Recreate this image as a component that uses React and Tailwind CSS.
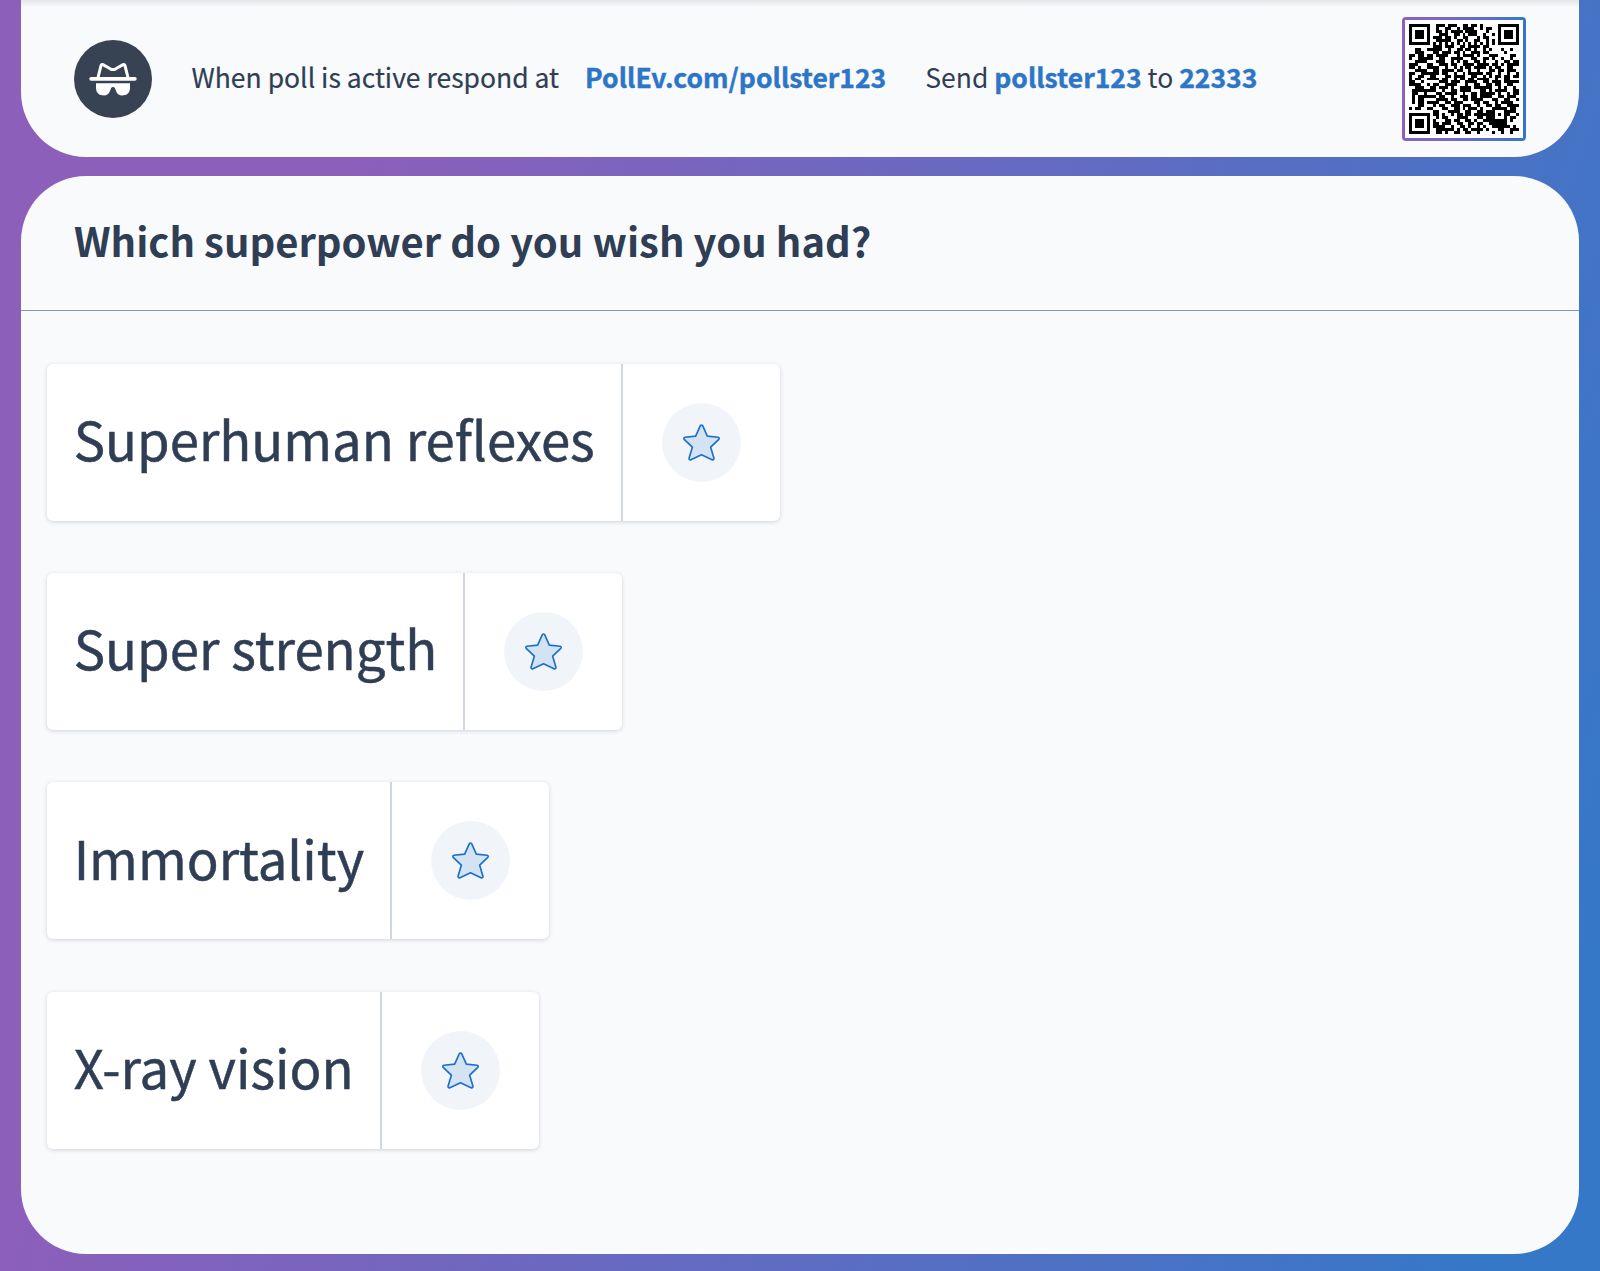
import clsx from "clsx";

const options = [
  { label: "Superhuman reflexes", width: "w-[733px]" },
  { label: "Super strength", width: "w-[575px]" },
  { label: "Immortality", width: "w-[502px]" },
  { label: "X-ray vision", width: "w-[491.5px]" },
];

// 37x37 modules
const qrRows = [
  "#######..###.###..##.##.#.....#######",
  "#.....#..#..##..#.####..#.##..#.....#",
  "#.###.#..##.#.####.####...#...#.###.#",
  "#.###.#...###..##.#.###..#..#.#.###.#",
  "#.###.#.###.##.#..##...#.##...#.###.#",
  "#.....#..#####..##.#..##..#.#.#.....#",
  "#######.#.#.#.#.#.#.#.#.#.#.#.#######",
  "........###.###..##.####.##..........",
  "..##..#####..#..##.##.#..#.#...#..#..",
  "..###...##.###.##.#..###.##.....#....",
  "##.##.##.####...#.####.#...###....##.",
  "#..#####..##..####...##..##.#..#..#..",
  "..####...###..#.#.##..##.#...#..##.##",
  "###...##..###.##..####.####.##.#.####",
  "##.#..####..#..#.#.##.####.#.##..##..",
  "..####..##.####.##..#..#...##.##.###.",
  "##..######.##..#..#.#####.##..#..#..#",
  "#..##..##...##.####..##..#.#.##.##.##",
  "#.##..####.##..#.##.##.####..#..##...",
  "##..#.....###.###..####..##.###.#####",
  "####..#.##..####...#..##..##.##..##..",
  "..###..##.###.#..####.######..#.#..#.",
  ".########..#..##.####...##.#.####..##",
  ".##..#...##.####..#..##.#####.#..#.##",
  ".#.######.##..#..###.##.####..##.###.",
  ".#.##....####.##..##.####...##..##..#",
  ".#.##.####..##.###....##.##..#.####..",
  "...##...#.##..###.###..#..##.##..####",
  "#.##..##...##..##.#.###.#...#####.##.",
  "........##...####..##..##.###...####.",
  "#######.##.#..#.##.##.#######.#.##..#",
  "#.....#..#.##...####...##.###...#.##.",
  "#.###.#.#...##.##..##.#..########.#..",
  "#.###.#.##.###..##..##.##..######....",
  "#.###.#.####..#..##.#..#.#..######.#.",
  "#.....#..######.#.##.####.#...##..###",
  "#######..##.#..##..##..#....#..#..#..",
];

function QrCode() {
  return (
    <div className="size-[124px] rounded-[4px] bg-gradient-to-r from-[#8e5fbe] to-[#3276cc] p-[3px]">
      <div className="size-full bg-white p-[4px]">
        <svg viewBox="0 0 37 37" className="size-full" shapeRendering="crispEdges">
          {qrRows.map((row, y) =>
            [...row].map((cell, x) =>
              cell === "#" ? <rect key={`${x}-${y}`} x={x} y={y} width="1" height="1" /> : null
            )
          )}
        </svg>
      </div>
    </div>
  );
}

function IncognitoIcon() {
  return (
    <svg viewBox="0 0 48 34" className="w-12" fill="none">
      <path
        d="M8.9 16 12 3.6Q12.4 2 14 2.7L21.2 6.8Q24 8.2 26.8 6.8L34 2.7Q35.6 2 36 3.6L39.1 16"
        stroke="white"
        strokeWidth="3"
      />
      <path d="M2.2 16.8H45.8" stroke="white" strokeWidth="3.8" strokeLinecap="round" />
      <path
        d="M7 21.2H41V26.4A7.3 7.3 0 0 1 26.8 28.4L26 26.2Q25.4 25 24 25T22 26.2L21.2 28.4A7.3 7.3 0 0 1 7 26.4Z"
        fill="white"
      />
    </svg>
  );
}

function StarIcon() {
  return (
    <svg viewBox="0 0 38 38" className="size-[37px]">
      <path
        d="M17.7 1.9Q19 .2 20.3 1.9L25 12.4 36 13.6Q37.8 14.2 36.8 15.7L28.4 23.8 31.8 35.2Q31.8 37.4 29.8 36.6L19 31.6 8.2 36.6Q6.2 37.4 6.2 35.2L9.6 23.8 1.2 15.7Q.2 14.2 2 13.6L13 12.4Z"
        fill="#d3e3f3"
        stroke="#1c6fcb"
        strokeWidth="1.7"
        strokeLinejoin="round"
      />
    </svg>
  );
}

function Option({ label, width }) {
  return (
    <div
      className={clsx(
        "flex h-[157px] rounded-[6px] bg-white shadow-[0_1px_4px_rgba(45,60,80,0.2)]",
        width
      )}
    >
      <div className="flex flex-1 items-center border-r-2 border-[#d0d6e6] pb-[8px] pl-[26.5px]">
        <span className="text-[52.7px] leading-none whitespace-nowrap [-webkit-text-stroke:0.5px_#2f3e54]">
          {label}
        </span>
      </div>
      <div className="flex w-[157px] items-center justify-center">
        <button className="flex size-[79px] items-center justify-center rounded-full bg-[#f1f5fa]">
          <StarIcon />
        </button>
      </div>
    </div>
  );
}

export default function App() {
  return (
    <div className="flex h-[1271px] w-[1600px] flex-col overflow-hidden bg-[linear-gradient(108deg,#8c5fbb_20%,#3578c8_95%)] px-[21px] font-['Noto_Sans_CJK_SC',sans-serif] text-[#2f3e54]">
      {/* Response instructions */}
      <header className="flex h-[157px] shrink-0 items-center rounded-b-[65px] bg-[linear-gradient(#e4e5e8,#f9fafc_7px)] px-[53px]">
        <div className="flex size-[78px] items-center justify-center rounded-full bg-[#374253]">
          <IncognitoIcon />
        </div>
        <p className="ml-[39.5px] pb-[2px] text-[26.5px] leading-none whitespace-nowrap [-webkit-text-stroke:0.2px]">
          When poll is active respond at
        </p>
        <p className="ml-[26px] pb-[2px] text-[26.5px] leading-none font-bold text-[#2d75c6] [-webkit-text-stroke:0.4px]">
          PollEv.com/pollster123
        </p>
        <p className="ml-[39px] pb-[2px] text-[26.5px] leading-none whitespace-nowrap">
          Send <b className="text-[#2d75c6] [-webkit-text-stroke:0.4px]">pollster123</b> to{" "}
          <b className="text-[#2d75c6] [-webkit-text-stroke:0.4px]">22333</b>
        </p>
        <div className="ml-auto">
          <QrCode />
        </div>
      </header>

      {/* Poll */}
      <main className="mt-[19.4px] h-[1077.6px] rounded-[65px] bg-[#f9fafc]">
        <div className="flex h-[134.5px] items-center border-b-[1.5px] border-[#8498b6] pb-[6px] pl-[53px]">
          <h1 className="text-[40px] leading-none font-bold">Which superpower do you wish you had?</h1>
        </div>
        <div className="flex flex-col gap-[52.4px] px-[26.2px] pt-[52.8px]">
          {options.map((option) => (
            <Option key={option.label} {...option} />
          ))}
        </div>
      </main>
    </div>
  );
}
